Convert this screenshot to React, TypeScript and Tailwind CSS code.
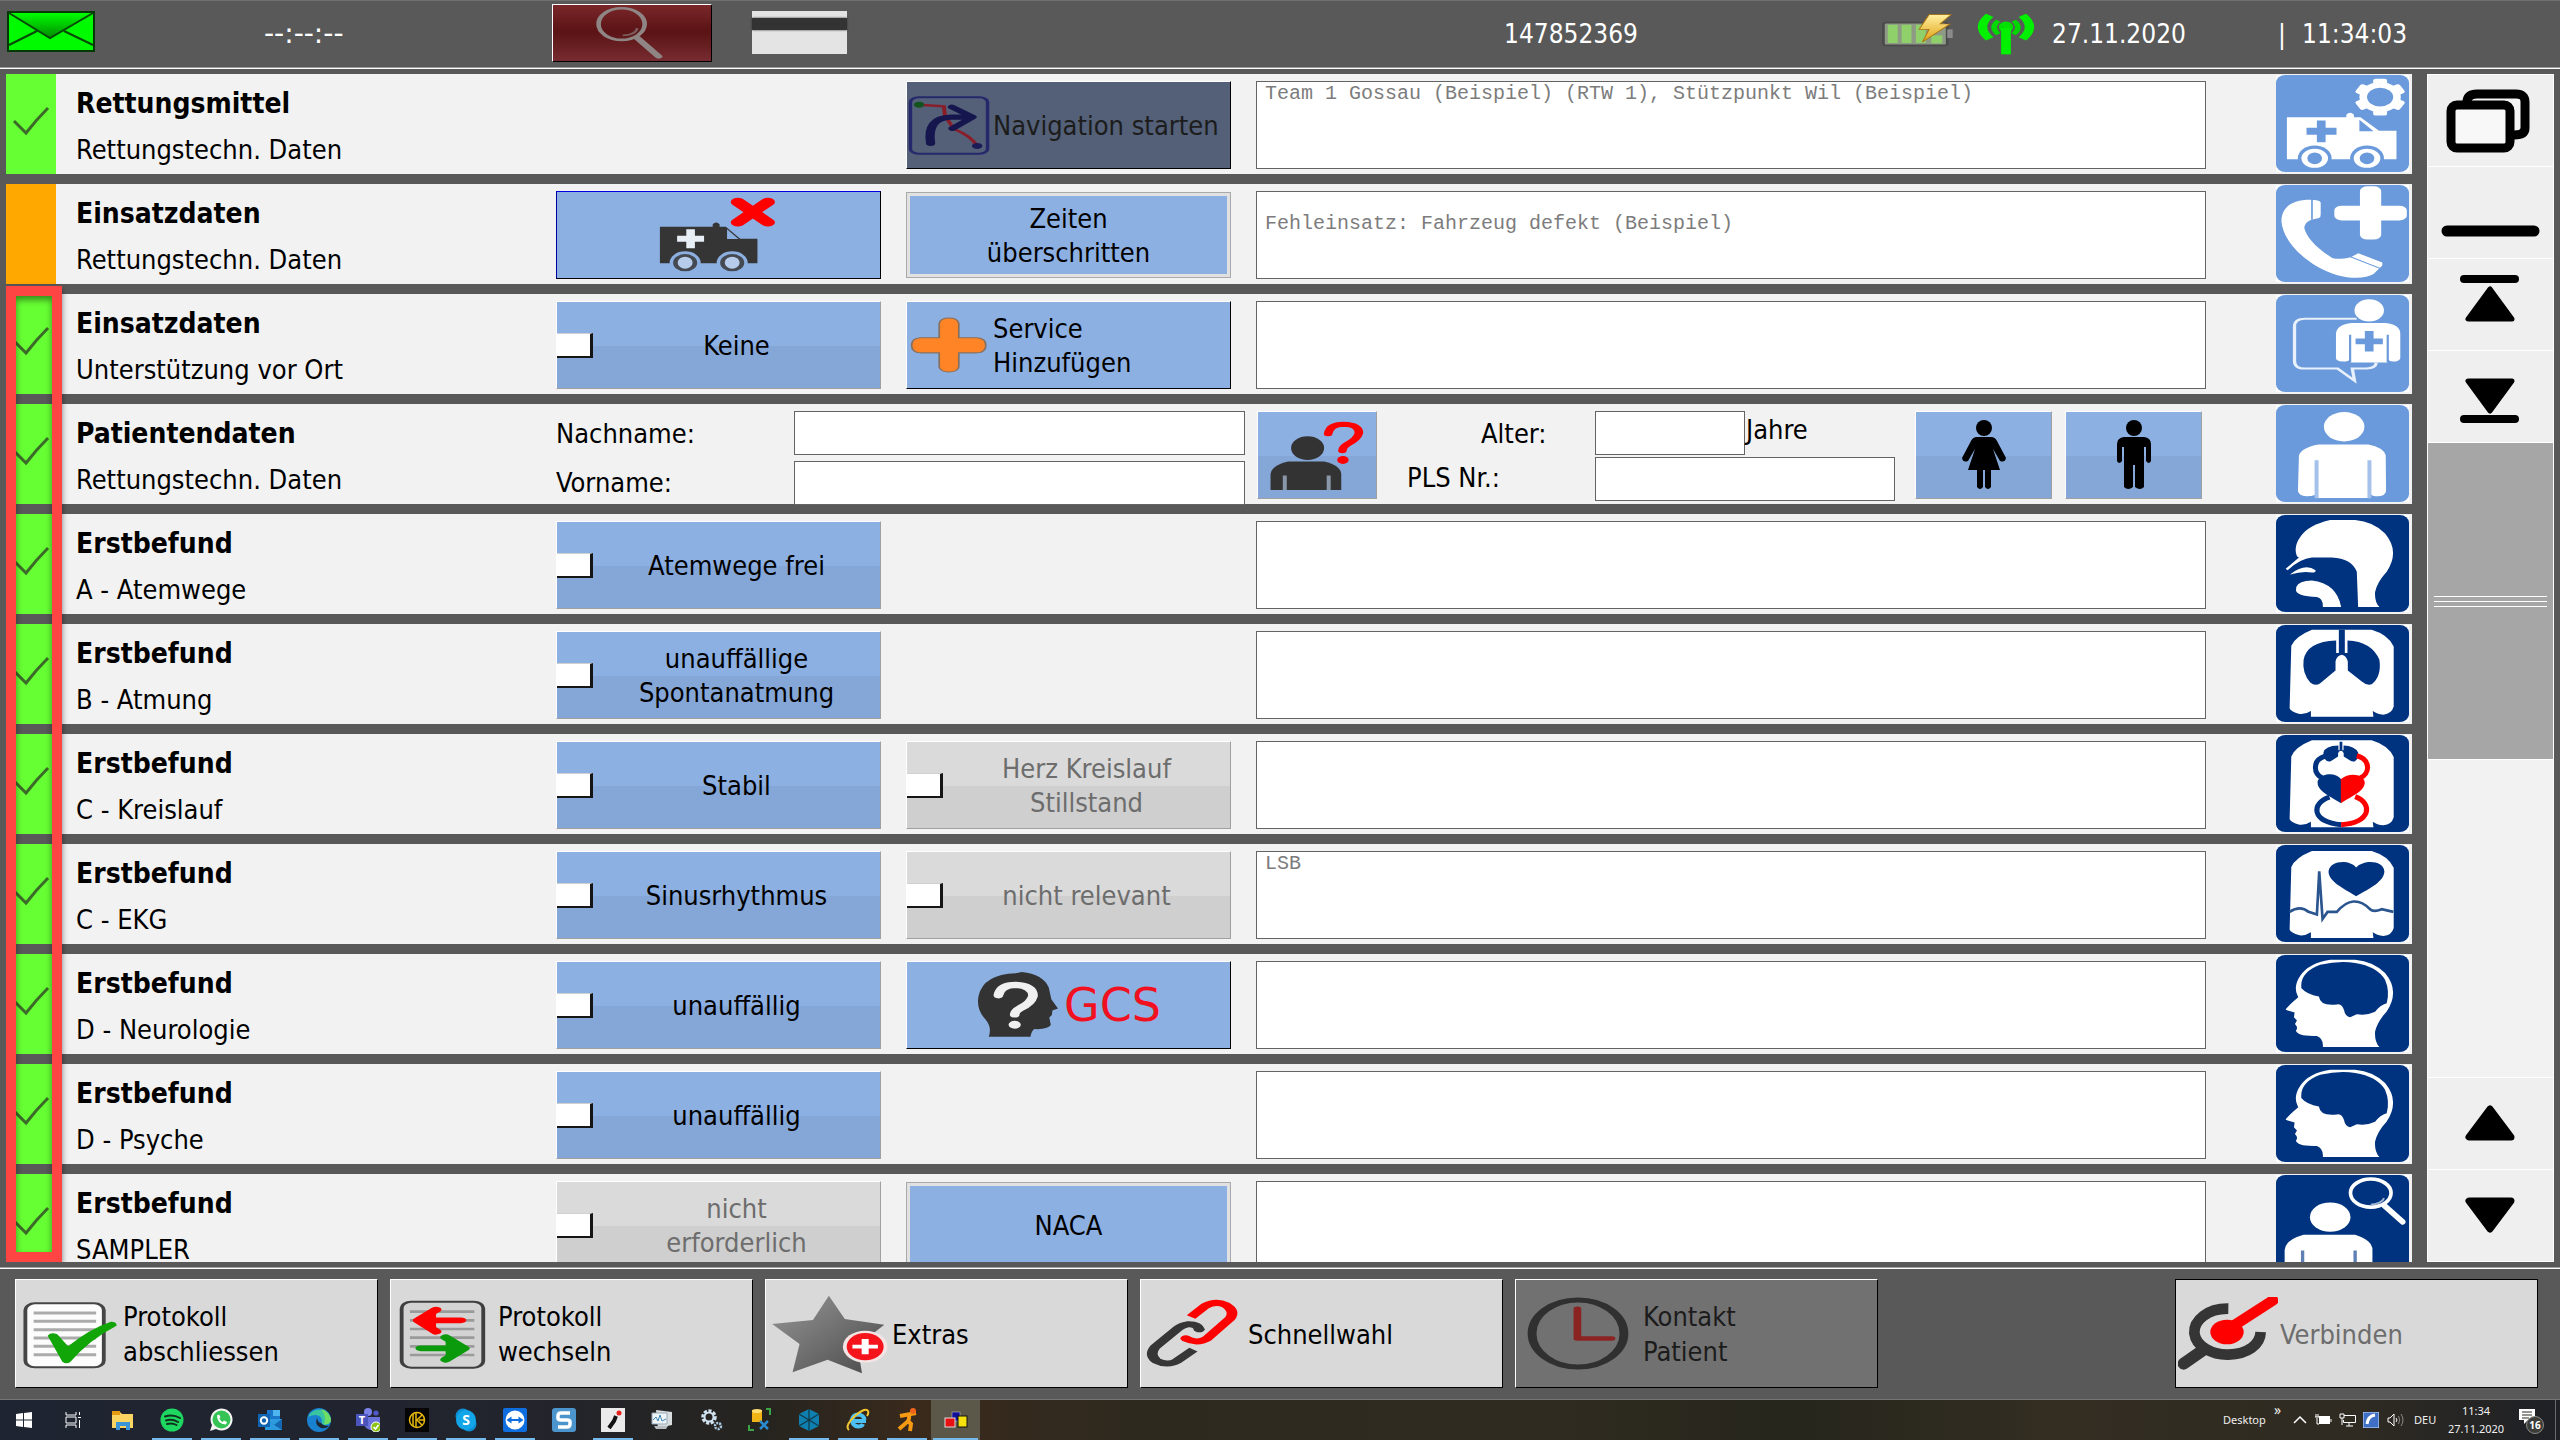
import type { ReactNode } from "react";

const LIGHT = "#6a9adb";
const NAVY = "#00337f";

/* ---------- row artwork ---------- */

function Tile({ box, dark, children }: { box: [number, number, number, number]; dark?: boolean; children: ReactNode }) {
  const [x, y, w, h] = box;
  return (
    <svg viewBox={box.join(" ")} preserveAspectRatio="none" className="h-[97px] w-[133px] shrink-0" aria-hidden="true">
      <rect x={x} y={y} width={w} height={h} fill="#ffffff" />
      <rect x={x} y={y} width={w} height={h} rx={w * 0.07} ry={h * 0.08} fill={dark ? NAVY : LIGHT} />
      {children}
    </svg>
  );
}

const TORSO =
  "M215,720 H395 Q445,735 461,770 V950 Q455,972 430,974 Q410,972 398,963 L400,980 H212 V963 Q195,974 178,972 Q150,965 148,955 L153,768 Q165,740 215,720Z";
const LUNGS =
  "M288,752 V790 H296 V720 H314 V790 H322 V752 Q395,755 418,810 Q425,860 395,883 Q380,888 365,875 L323,842 V815 Q318,797 305,795 Q290,797 286,815 V842 L240,880 Q225,890 210,878 Q185,850 190,810 Q200,755 288,752Z";

const AmbulanceGear = () => (
  <Tile box={[1049, 226, 244, 290]}>
    <g fill="#fff">
      <ellipse cx="1240" cy="292" rx="38" ry="45" />
      {[0, 60, 120].map((a) => (
        <rect key={a} x="1225" y="237" width="30" height="110" rx="6" transform={`translate(1240 292) scale(.85 1) rotate(${a}) translate(-1240 -292)`} />
      ))}
    </g>
    <ellipse cx="1240" cy="292" rx="24" ry="28" fill={LIGHT} />
    <path fill="#fff" d="M1069,352 H1178 V345 Q1185,333 1192,345 V352 H1204 L1238,393 H1270 V478 H1069Z" />
    <path fill={LIGHT} d="M1202,360 L1228,394 H1202Z M1124,362 h16 v22 h20 v21 h-20 v22 h-16 v-22 h-19 v-21 h19Z" />
    {[1120, 1216].map((c) => (
      <g key={c}>
        <ellipse cx={c} cy="475" rx="31" ry="38" fill={LIGHT} />
        <ellipse cx={c} cy="475" rx="19" ry="23" fill={LIGHT} stroke="#fff" strokeWidth="11" />
      </g>
    ))}
  </Tile>
);

const PhonePlus = () => (
  <Tile box={[1049, 556, 244, 290]}>
    <rect x="1203" y="560" width="39" height="159" rx="14" fill="#fff" />
    <rect x="1156" y="618" width="133" height="44" rx="14" fill="#fff" />
    <path
      fill="#fff"
      d="M1112,600 C1080,600 1059,620 1059,665 C1062,730 1110,800 1160,825 C1190,838 1215,835 1228,822 L1244,797 V788 L1200,760 L1186,772 C1170,778 1155,778 1150,772 C1120,740 1105,710 1101,685 C1101,672 1108,662 1116,659 L1128,655 Q1131,652 1131,645 V608 Q1129,600 1112,600Z"
    />
    <path d="M1115,598 V660 M1186,771 L1241,806" stroke={LIGHT} strokeWidth="3" />
  </Tile>
);

const HelperBubble = () => (
  <Tile box={[1049, 886, 244, 290]}>
    <path d="M1197,957 H1102 Q1083,957 1083,980 V1083 Q1083,1106 1102,1106 H1162 L1193,1142 L1189,1106 H1215 Q1232,1104 1233,1088" fill="none" stroke="#e8f0fb" strokeWidth="6" />
    <ellipse cx="1220" cy="932" rx="27" ry="33" fill="#fff" />
    <path fill="#fff" d="M1188,970 H1250 Q1277,975 1277,1002 V1075 Q1275,1085 1264,1085 Q1255,1083 1253,1075 V1088 H1186 V1075 Q1184,1085 1172,1085 Q1159,1083 1159,1075 V1002 Q1160,975 1188,970Z" />
    <path d="M1185,1005 V1086 M1254,1005 V1086" stroke={LIGHT} strokeWidth="4" />
    <path fill={LIGHT} d="M1212,994 h16 v22 h17 v17 h-17 v22 h-16 v-22 h-17 v-17 h17Z" />
  </Tile>
);

const Person = () => (
  <Tile box={[107, 45, 400, 290]}>
    <ellipse cx="312" cy="110" rx="61" ry="44" fill="#fff" />
    <path fill="#fff" d="M235,163 H385 Q430,172 437,195 L438,302 Q436,318 412,318 Q396,318 393,312 L384,323 H233 L224,314 Q215,318 198,318 Q176,316 173,302 L176,195 Q185,172 235,163Z" />
    <path d="M229,210 V324 M388,210 V324" stroke="#a3c1ea" strokeWidth="12" />
  </Tile>
);

const Airway = () => (
  <Tile dark box={[107, 375, 400, 290]}>
    <path fill="#fff" d="M170,498 Q158,470 182,438 Q205,405 270,390 H345 Q400,395 435,430 Q460,460 459,490 Q459,515 440,545 Q412,575 405,605 Q403,635 418,650 H354 L350,545 Q335,505 275,502 H215 Q180,505 142,540 L136,536 L176,502Z" />
    <path fill="#fff" d="M150,552 Q195,518 226,540 Q228,547 215,547 Q185,542 150,553Z" />
    <path fill="#fff" d="M168,590 Q175,572 215,571 Q290,580 303,650 H248 Q250,625 230,620 Q170,618 167,600Z" />
  </Tile>
);

const Lungs = () => (
  <Tile dark box={[107, 706, 400, 290]}>
    <path d={TORSO} fill="#fff" />
    <path d={LUNGS} fill={NAVY} />
  </Tile>
);

const Circulation = () => (
  <Tile dark box={[107, 1036, 400, 290]}>
    <path d={TORSO} fill="#fff" transform="translate(0 332)" />
    <path d={LUNGS} fill={NAVY} transform="translate(163 797) scale(.457 .36)" />
    <g fill="none" strokeWidth="15">
      <path d="M253,1100 C215,1112 220,1152 246,1164" stroke={NAVY} />
      <path d="M350,1098 C395,1110 388,1155 360,1164" stroke="#f00" />
      <path d="M268,1222 C212,1240 212,1296 304,1304" stroke={NAVY} />
      <path d="M345,1220 C400,1240 392,1300 303,1304" stroke="#f00" />
    </g>
    <path fill={NAVY} d="M303,1168 C285,1145 240,1150 232,1175 C230,1200 255,1212 303,1240Z" />
    <path fill="#f00" d="M302,1168 C330,1145 375,1155 374,1180 C370,1205 345,1212 302,1240Z" />
  </Tile>
);

const Ecg = () => (
  <Tile dark box={[107, 76, 400, 290]}>
    <path d={TORSO} fill="#fff" transform="translate(0 -626)" />
    <path fill={NAVY} d="M348,143 C330,120 270,120 265,155 C265,185 310,205 348,229 C390,205 432,185 433,155 C430,120 370,120 348,143Z" />
    <path d="M148,276 Q180,255 205,276 L230,284 L237,155 L247,297 L262,276 H290 Q340,218 390,268 Q400,278 425,268 L460,276" fill="none" stroke="#2a558f" strokeWidth="8" />
  </Tile>
);

const Brain = () => (
  <Tile dark box={[107, 406, 400, 290]}>
    <path fill="#fff" d="M172,528 Q158,500 180,468 Q205,430 270,420 H345 Q400,425 435,460 Q460,490 459,520 Q459,545 440,575 Q412,605 405,635 Q403,665 418,681 H248 Q250,655 230,648 Q170,650 167,632 Q175,622 164,612 L170,602 L161,592 L163,578 L136,570 Q140,560 174,532Z" />
    <path fill={NAVY} d="M183,495 Q185,455 240,435 Q300,422 345,430 Q410,440 435,480 Q450,515 440,550 Q420,555 405,576 Q380,588 350,583 L330,592 Q315,590 312,572 Q305,550 290,554 Q240,560 236,530 Q200,525 183,505Z" />
  </Tile>
);

const PersonSearch = () => (
  <Tile dark box={[107, 1066, 400, 290]}>
    <ellipse cx="392" cy="1120" rx="61" ry="42" fill="none" stroke="#fff" strokeWidth="11" />
    <path d="M392,1155 Q425,1152 432,1135" fill="none" stroke="#9fb4d3" strokeWidth="6" />
    <path d="M432,1157 L488,1206" stroke="#fff" strokeWidth="17" strokeLinecap="round" />
    <ellipse cx="270" cy="1192" rx="61" ry="44" fill="#fff" />
    <path fill="#fff" d="M190,1245 H345 Q397,1262 397,1290 V1400 H133 V1290 Q135,1260 190,1245" />
    <path d="M187,1292 V1400 M345,1292 V1400" stroke="#5d7fb4" strokeWidth="10" />
  </Tile>
);

/* ---------- button artwork ---------- */

const AmbulanceX = () => (
  <svg viewBox="1132 585 244 240" preserveAspectRatio="none" className="h-20 w-[140px]" aria-hidden="true">
    <path fill="#353535" d="M1151,680 H1243 V673 Q1249,662 1255,673 V680 H1266 L1291,716 H1321 V790 H1151Z" />
    <path fill="#8db0e3" d="M1268,688 L1288,717 H1268Z" />
    <path fill="#e8eef6" d="M1197,688 h15 v19 h16 v18 h-16 v20 h-15 v-20 h-16 v-18 h16Z" />
    {[1195, 1277].map((c) => (
      <g key={c}>
        <ellipse cx={c} cy="788" rx="27" ry="34" fill="#8db0e3" />
        <ellipse cx={c} cy="788" rx="17" ry="22" fill="#b7cceb" stroke="#454a52" strokeWidth="8" />
      </g>
    ))}
    <path d="M1287,606 L1339,667 M1339,606 L1287,667" stroke="#f00" strokeWidth="25" strokeLinecap="round" />
  </svg>
);

const NavIcon = () => (
  <svg viewBox="84 284 146 182" preserveAspectRatio="none" className="h-[61px] w-[84px] shrink-0" aria-hidden="true">
    <rect x="90" y="291" width="134" height="168" rx="14" fill="none" stroke="#25296b" strokeWidth="6" />
    <path d="M105,313 L148,318 L150,345 L165,385 Q195,405 206,436" fill="none" stroke="#8a1d2a" strokeWidth="7" />
    <path d="M125,428 Q118,352 160,350 H190" fill="none" stroke="#16164f" strokeWidth="16" strokeLinecap="round" />
    <path d="M162,320 L198,350 L163,384" fill="none" stroke="#16164f" strokeWidth="14" strokeLinecap="round" strokeLinejoin="round" />
    <circle cx="105" cy="313" r="9" fill="#14521e" />
    <circle cx="206" cy="436" r="9" fill="#1b1b58" />
  </svg>
);

const PlusIcon = () => (
  <svg viewBox="84 943 146 182" preserveAspectRatio="none" className="h-[61px] w-[84px] shrink-0" aria-hidden="true">
    <path
      fill="#ff8426"
      stroke="#86705f"
      strokeWidth="3"
      d="M140,968 Q142,952 157,952 Q172,952 174,968 V1011 H206 Q221,1013 221,1033 Q221,1054 206,1056 H174 V1098 Q172,1113 157,1113 Q142,1113 140,1098 V1056 H107 Q92,1054 92,1033 Q92,1013 107,1011 H140Z"
    />
  </svg>
);

const PersonQuestion = () => (
  <svg viewBox="692 66 207 260" preserveAspectRatio="none" className="h-full w-full" aria-hidden="true">
    <ellipse cx="779" cy="175" rx="29" ry="36" fill="#333" />
    <path fill="#333" d="M745,216 H808 Q838,228 838,255 V302 H714 V255 Q715,228 745,216Z" />
    <path d="M739,258 V302 M816,258 V302" stroke="#8a97a8" strokeWidth="7" />
    <path d="M815,132 Q818,103 842,103 Q870,104 869,130 Q866,148 850,162 Q840,172 840,183" fill="none" stroke="#f00" strokeWidth="15" strokeLinecap="round" />
    <ellipse cx="841" cy="211" rx="10" ry="12" fill="#f00" />
  </svg>
);

const Female = () => (
  <svg viewBox="0 0 44 70" className="h-[70px] w-[44px]" aria-hidden="true">
    <circle cx="22" cy="8" r="8" />
    <path d="M15,17 H29 Q33,17 35,21 L44,38 Q43,43 38,41 L31,29 L38,50 H29 V67 Q26,71 23,67 V50 H21 V67 Q18,71 15,67 V50 H6 L13,29 L6,41 Q1,43 0,38 L9,21 Q11,17 15,17Z" />
  </svg>
);

const Male = () => (
  <svg viewBox="0 0 36 70" className="h-[70px] w-[36px]" aria-hidden="true">
    <circle cx="18" cy="8" r="8" />
    <path d="M8,17 H28 Q35,18 35,24 V41 Q33,45 30,41 V27 H28 V67 Q24,71 19,67 V45 H17 V67 Q12,71 8,67 V27 H6 V41 Q3,45 1,41 V24 Q1,18 8,17Z" />
  </svg>
);

const HeadQuestion = () => (
  <svg viewBox="930 575 165 205" preserveAspectRatio="none" className="h-[68px] w-[84px]" aria-hidden="true">
    <path fill="#333" d="M955,773 Q962,745 948,720 Q930,690 935,650 Q945,585 1008,582 L1020,578 Q1062,585 1073,625 L1078,660 L1091,688 L1080,694 L1079,708 L1074,715 L1077,738 Q1070,752 1045,750 Q1039,755 1037,773Z" />
    <path d="M974,648 Q978,617 1008,617 Q1042,620 1042,650 Q1038,672 1018,686 Q1006,696 1006,706" fill="none" stroke="#f0f0f0" strokeWidth="19" strokeLinecap="round" />
    <circle cx="1006" cy="737" r="12" fill="#f0f0f0" />
  </svg>
);

const DocCheck = () => (
  <svg viewBox="30 425 160 240" preserveAspectRatio="none" className="h-20 w-[102px] shrink-0" aria-hidden="true">
    <rect x="40" y="453" width="123" height="192" rx="15" ry="20" fill="#fcfcfc" stroke="#454545" strokeWidth="6" />
    <path d="M53,482 H151 M53,507 H151 M53,532 H151 M53,557 H151 M53,582 H151 M53,607 H151" stroke="#ababab" strokeWidth="9" />
    <path fill="#12a508" d="M75,550 Q80,538 90,546 L107,582 Q140,530 174,508 Q184,508 183,520 Q140,562 110,630 Q104,637 98,628Z" />
  </svg>
);

const DocSwap = () => (
  <svg viewBox="618 425 160 240" preserveAspectRatio="none" className="h-20 w-[102px] shrink-0" aria-hidden="true">
    <rect x="630" y="448" width="128" height="198" rx="15" ry="20" fill="#d3d3d3" stroke="#3f3f3f" strokeWidth="6" />
    <path d="M643,478 H744 M643,504 H744 M643,530 H744 M643,556 H744 M643,582 H744 M643,608 H744" stroke="#9a9a9a" strokeWidth="8" />
    <g strokeLinecap="round" strokeLinejoin="round">
      <path d="M684,472 L656,504 L684,538 M670,504 H723" fill="none" stroke="#f00" strokeWidth="17" />
      <path d="M684,472 L656,504 L684,538Z" fill="#f00" />
      <path d="M699,555 L728,588 L699,622 M660,588 H715" fill="none" stroke="#0b9a0b" strokeWidth="17" />
      <path d="M699,555 L728,588 L699,622Z" fill="#0b9a0b" />
    </g>
  </svg>
);

const StarPlus = () => (
  <svg viewBox="1206 425 190 240" preserveAspectRatio="none" className="h-20 w-[121px] shrink-0 overflow-visible" aria-hidden="true">
    <defs>
      <linearGradient id="star" x1="0" y1="0" x2="1" y2="1">
        <stop offset="0" stopColor="#969696" />
        <stop offset="1" stopColor="#4a4a4a" />
      </linearGradient>
    </defs>
    <path fill="url(#star)" d="M1300,430 L1325,500 L1387,517 L1345,580 L1352,663 L1298,622 L1243,660 L1254,575 L1211,515 L1275,503Z" />
    <ellipse cx="1357" cy="583" rx="35" ry="48" fill="#f4e4e4" />
    <ellipse cx="1357" cy="583" rx="29" ry="41" fill="#f5141c" />
    <path d="M1337,583 H1377 M1357,560 V606" stroke="#fff" strokeWidth="11" />
  </svg>
);

const Chain = () => (
  <svg viewBox="280 135 170 225" preserveAspectRatio="none" className="h-[75px] w-[100px] shrink-0" aria-hidden="true">
    <g fill="none" strokeWidth="18">
      <path d="M360,198 L384,165 Q402,148 419,162 Q436,180 426,203 L387,263 Q370,280 350,262" stroke="#f00" />
      <path d="M374,238 Q372,218 354,220 Q345,222 338,232 L299,288 Q288,312 301,329 Q320,346 336,330 L364,296" stroke="#363636" />
    </g>
    <circle cx="351" cy="262" r="9" fill="#f00" />
    <circle cx="374" cy="235" r="9" fill="#363636" />
  </svg>
);

const Clock = () => (
  <svg viewBox="930 135 180 230" preserveAspectRatio="none" className="h-[77px] w-[106px] shrink-0" aria-hidden="true">
    <ellipse cx="1020" cy="250" rx="78" ry="100" fill="none" stroke="#303030" strokeWidth="15" />
    <path d="M1019,176 V265 H1077" fill="none" stroke="#8c2323" strokeWidth="13" strokeLinecap="round" strokeLinejoin="round" />
  </svg>
);

const Connect = () => (
  <svg viewBox="111 112 300 222" preserveAspectRatio="none" className="h-[74px] w-[100px] shrink-0" aria-hidden="true">
    <path d="M262,147 C200,146 158,182 160,220 C165,262 215,286 262,285 C320,283 358,255 359,217" fill="none" stroke="#353535" strokeWidth="32" />
    <path d="M185,272 L128,312" stroke="#353535" strokeWidth="36" strokeLinecap="round" />
    <ellipse cx="258" cy="217" rx="50" ry="37" fill="#f00" />
    <path d="M280,197 L396,122" stroke="#f00" strokeWidth="32" strokeLinecap="round" />
  </svg>
);

/* ---------- controls ---------- */

const BLUE_HALF = "bg-[linear-gradient(#8db0e3_51%,#85a7d8_51%)] text-black";
const GREY_HALF = "bg-[linear-gradient(#dadada_51%,#cfcfcf_51%)] text-[#6d6d6d]";

function CheckButton({ lines, grey }: { lines: string[]; grey?: boolean }) {
  return (
    <label className={`flex h-[88px] w-[325px] shrink-0 items-center border border-white border-r-[#a0a0a0] border-b-[#a0a0a0] ${grey ? GREY_HALF : BLUE_HALF}`}>
      <input type="checkbox" className="h-[25px] w-9 shrink-0 appearance-none border-t border-r-[3px] border-b-2 border-t-[#d0d0d0] border-r-[#151515] border-b-[#151515] bg-white" />
      <span className="flex flex-1 flex-col pt-px text-center leading-[34px]">
        {lines.map((l) => (
          <span key={l}>{l}</span>
        ))}
      </span>
    </label>
  );
}

function PushButton({ children, tone = "blue", name }: { children: ReactNode; tone?: "blue" | "focus" | "dim"; name?: string }) {
  const tones = {
    blue: "border-white border-r-black border-b-black bg-[#8db0e3]",
    focus: "border-black border-t-[#0000e0] border-l-[#0000a0] bg-[#8db0e3]",
    dim: "border-white border-r-black border-b-black bg-[#536077] text-[#1c1c1c]",
  };
  return (
    <button type="button" aria-label={name} className={`flex h-[88px] w-[325px] shrink-0 items-center border text-left leading-[34px] ${tones[tone]}`}>
      {children}
    </button>
  );
}

function FramedButton({ lines }: { lines: string[] }) {
  return (
    <button type="button" className="my-px flex h-[86px] w-[325px] shrink-0 border border-[#a9a9a9] bg-[#e1e1e1] p-[3px] leading-[34px]">
      <span className="flex h-full w-full flex-col items-center justify-center bg-[#8db0e3] pt-px">
        {lines.map((l) => (
          <span key={l}>{l}</span>
        ))}
      </span>
    </button>
  );
}

function Note({ label, text = "" }: { label: string; text?: string }) {
  return (
    <textarea
      aria-label={label}
      readOnly
      defaultValue={text}
      className="h-[88px] min-w-0 flex-1 resize-none border border-[#646464] bg-white px-2 pt-0.5 font-['Liberation_Mono',monospace] text-xl leading-5 text-[#7c7c7c] outline-none"
    />
  );
}

function SexButton({ name, children }: { name: string; children: ReactNode }) {
  return (
    <button type="button" aria-label={name} className={`flex h-[88px] w-[137px] items-center justify-center border border-white border-r-[#a0a0a0] border-b-[#a0a0a0] ${BLUE_HALF}`}>
      {children}
    </button>
  );
}

const FIELD = "h-11 border border-[#646464] bg-white px-2 outline-none";

function PatientFields() {
  return (
    <div className="flex flex-1 items-start">
      <div className="grid flex-1 grid-cols-[238px_1fr] gap-y-1 pt-[7px]">
        <label htmlFor="nachname" className="leading-[46px]">Nachname:</label>
        <input id="nachname" className={FIELD} />
        <label htmlFor="vorname" className="leading-[44px]">Vorname:</label>
        <input id="vorname" className={FIELD} />
      </div>
      <button type="button" aria-label="Unbekannter Patient" className={`mt-[7px] ml-3 h-[88px] w-[120px] border border-white border-r-[#a0a0a0] border-b-[#a0a0a0] ${BLUE_HALF}`}>
        <PersonQuestion />
      </button>
      <div className="ml-[30px] grid grid-cols-[188px_300px] gap-y-[2px] pt-[7px]">
        <label htmlFor="alter" className="h-11 pl-[74px] leading-[46px]">Alter:</label>
        <div className="flex h-11 items-start">
          <input id="alter" className={`${FIELD} w-[150px]`} />
          <span className="pl-px leading-[38px]">Jahre</span>
        </div>
        <label htmlFor="pls" className="leading-[42px]">PLS Nr.:</label>
        <input id="pls" className={FIELD} />
      </div>
      <div className="mt-[7px] ml-5 flex gap-[13px] pr-1">
        <SexButton name="weiblich"><Female /></SexButton>
        <SexButton name="männlich"><Male /></SexButton>
      </div>
    </div>
  );
}

type RowData = {
  title: string;
  sub: string;
  state?: "ok" | "warn";
  first?: ReactNode;
  second?: ReactNode;
  note?: string;
  body?: ReactNode;
  icon: ReactNode;
};

const ROWS: RowData[] = [
  {
    title: "Rettungsmittel",
    sub: "Rettungstechn. Daten",
    second: <PushButton tone="dim"><NavIcon /><span className="pt-0.5 pl-0.5">Navigation starten</span></PushButton>,
    note: "Team 1 Gossau (Beispiel) (RTW 1), Stützpunkt Wil (Beispiel)",
    icon: <AmbulanceGear />,
  },
  {
    title: "Einsatzdaten",
    sub: "Rettungstechn. Daten",
    state: "warn",
    first: <PushButton tone="focus" name="Fehleinsatz"><span className="flex flex-1 justify-center"><AmbulanceX /></span></PushButton>,
    second: <FramedButton lines={["Zeiten", "überschritten"]} />,
    note: "\nFehleinsatz: Fahrzeug defekt (Beispiel)",
    icon: <PhonePlus />,
  },
  {
    title: "Einsatzdaten",
    sub: "Unterstützung vor Ort",
    first: <CheckButton lines={["Keine"]} />,
    second: <PushButton><PlusIcon /><span className="flex flex-col pt-0.5 pl-0.5"><span>Service</span><span>Hinzufügen</span></span></PushButton>,
    icon: <HelperBubble />,
  },
  { title: "Patientendaten", sub: "Rettungstechn. Daten", body: <PatientFields />, icon: <Person /> },
  { title: "Erstbefund", sub: "A - Atemwege", first: <CheckButton lines={["Atemwege frei"]} />, icon: <Airway /> },
  { title: "Erstbefund", sub: "B - Atmung", first: <CheckButton lines={["unauffällige", "Spontanatmung"]} />, icon: <Lungs /> },
  {
    title: "Erstbefund",
    sub: "C - Kreislauf",
    first: <CheckButton lines={["Stabil"]} />,
    second: <CheckButton grey lines={["Herz Kreislauf", "Stillstand"]} />,
    icon: <Circulation />,
  },
  {
    title: "Erstbefund",
    sub: "C - EKG",
    first: <CheckButton lines={["Sinusrhythmus"]} />,
    second: <CheckButton grey lines={["nicht relevant"]} />,
    note: "LSB",
    icon: <Ecg />,
  },
  {
    title: "Erstbefund",
    sub: "D - Neurologie",
    first: <CheckButton lines={["unauffällig"]} />,
    second: (
      <PushButton>
        <span className="flex flex-1 items-center justify-center gap-1 font-['DejaVu_Sans',sans-serif] text-[46px] text-[#f01020]">
          <HeadQuestion />
          GCS
        </span>
      </PushButton>
    ),
    icon: <Brain />,
  },
  { title: "Erstbefund", sub: "D - Psyche", first: <CheckButton lines={["unauffällig"]} />, icon: <Brain /> },
  {
    title: "Erstbefund",
    sub: "SAMPLER",
    first: <CheckButton grey lines={["nicht", "erforderlich"]} />,
    second: <FramedButton lines={["NACA"]} />,
    icon: <PersonSearch />,
  },
];

function Row({ row }: { row: RowData }) {
  return (
    <section className="flex h-[100px] shrink-0 bg-[#f2f2f2]">
      <div className={`w-[50px] shrink-0 ${row.state === "warn" ? "bg-[#ffa800]" : "bg-[#66ff33]"}`}>
        {row.state !== "warn" && (
          <svg viewBox="0 0 50 100" className="h-[100px] w-[50px]" aria-hidden="true">
            <path d="M8,47 L20,59 Q30,46 42,34" fill="none" stroke="#3b6a29" strokeWidth="3" />
          </svg>
        )}
      </div>
      <div className="w-[500px] shrink-0 pt-[13px] pl-5 leading-[34px]">
        <h2 className="text-[28px] leading-[34px] font-bold">{row.title}</h2>
        <p className="mt-3">{row.sub}</p>
      </div>
      {row.body ?? (
        <div className="flex flex-1 items-start pt-[7px]">
          <div className="w-[350px] shrink-0">{row.first}</div>
          <div className="w-[350px] shrink-0">{row.second}</div>
          <Note label={`${row.title} ${row.sub}`} text={row.note} />
        </div>
      )}
      <div className="flex shrink-0 bg-[#f2f2f2] pt-px pr-[3px] pl-[70px]">{row.icon}</div>
    </section>
  );
}

/* ---------- side bar ---------- */

function SideButton({ name, children }: { name: string; children: ReactNode }) {
  return (
    <button type="button" aria-label={name} className="h-[92px] shrink-0 border-t border-white bg-[#efefef]">
      <svg viewBox="0 0 125 91" className="h-[91px] w-full" aria-hidden="true" strokeLinejoin="round" strokeLinecap="round">
        {children}
      </svg>
    </button>
  );
}

function SideBar() {
  return (
    <nav className="flex w-[127px] shrink-0 flex-col border border-t-0 border-white bg-[#f2f2f2]">
      <SideButton name="Fenster">
        <path fill="#f4f4f4" stroke="#000" strokeWidth="9" strokeLinecap="butt" d="M39,30 V26 Q40,19 49,19 H88 Q97,19 97,27 V53 Q97,60 86,60" />
        <rect x="23" y="30" width="59" height="43" rx="6" fill="#f8f8f8" stroke="#000" strokeWidth="9" />
      </SideButton>
      <SideButton name="Minimieren">
        <path stroke="#000" strokeWidth="11" d="M19,64 H106" />
      </SideButton>
      <SideButton name="Zum Anfang">
        <path stroke="#000" strokeWidth="8" d="M36,20 H87" />
        <path stroke="#000" strokeWidth="5" d="M62,30 L40,60 H84Z" />
      </SideButton>
      <SideButton name="Zum Ende">
        <path stroke="#000" strokeWidth="8" d="M36,68 H87" />
        <path stroke="#000" strokeWidth="5" d="M62,60 L40,30 H84Z" />
      </SideButton>
      <div className="flex h-[318px] shrink-0 flex-col justify-center gap-1 border-y border-white bg-[#a6a6a6] px-1.5">
        <div className="h-px bg-white" />
        <div className="h-px bg-white" />
        <div className="h-px bg-white" />
      </div>
      <div className="flex-1" />
      <SideButton name="Nach oben">
        <path stroke="#000" strokeWidth="7" d="M62,31 L41,59 H83Z" />
      </SideButton>
      <SideButton name="Nach unten">
        <path stroke="#000" strokeWidth="7" d="M62,59 L41,31 H83Z" />
      </SideButton>
    </nav>
  );
}

/* ---------- header and footer ---------- */

function Header() {
  return (
    <header className="flex h-[69px] shrink-0 items-start border-b border-white text-[26px] leading-10 text-white shadow-[inset_0_-1px_0_#9a9a9a,inset_0_1px_0_#707070]">
      <button type="button" aria-label="Nachrichten" className="mt-[11px] ml-[7px]">
        <svg viewBox="0 0 88 41" className="h-[41px] w-[88px]" aria-hidden="true">
          <defs>
            <linearGradient id="mail" x1="0" y1="0" x2="0" y2="1">
              <stop offset="0" stopColor="#00ff00" />
              <stop offset="1" stopColor="#008a00" />
            </linearGradient>
          </defs>
          <rect x="1" y="1" width="86" height="39" fill="#00fb00" stroke="#063806" strokeWidth="2" />
          <path d="M2,2 L43,27 L86,2Z" fill="url(#mail)" />
          <path d="M2,2 L43,27 L86,2 M2,34 L30,20 M86,34 L57,20" fill="none" stroke="#064a06" strokeWidth="2" />
        </svg>
      </button>
      <span className="mt-[14px] ml-[169px] w-[288px] font-['DejaVu_Sans',sans-serif] text-[28px]">--:--:--</span>
      <button type="button" aria-label="Suchen" className="mt-1 h-[58px] w-40 border border-white border-r-black border-b-black bg-[linear-gradient(#7a2729,#5c1416_45%,#5c1416_50%,#762c30)]">
        <svg viewBox="964 14 274 170" preserveAspectRatio="none" className="h-full w-full" aria-hidden="true">
          <ellipse cx="1083" cy="72" rx="40" ry="48" fill="none" stroke="#8f8585" strokeWidth="8" />
          <path d="M1085,106 Q1108,104 1110,84" fill="none" stroke="#7a5a5a" strokeWidth="5" />
          <path d="M1110,114 L1147,170" stroke="#8f8585" strokeWidth="13" strokeLinecap="round" />
        </svg>
      </button>
      <div className="mt-[11px] ml-10 h-[43px] w-[95px] bg-[#e4e4e4] pt-[7px]">
        <div className="h-3 bg-[#333] shadow-[0_0_2px_#333]" />
      </div>
      <div className="mt-[14px] mr-[148px] ml-auto flex items-start">
        <span className="w-[375px]">147852369</span>
        <svg viewBox="325 38 140 105" preserveAspectRatio="none" className="h-[35px] w-[77px]" aria-hidden="true">
          <defs>
            <linearGradient id="bolt" x1="0" y1="0" x2="0" y2="1">
              <stop offset="0" stopColor="#fff0a0" />
              <stop offset="1" stopColor="#e0a010" />
            </linearGradient>
          </defs>
          <rect x="333" y="64" width="116" height="68" rx="5" fill="#8e9a86" stroke="#4a4a4a" strokeWidth="5" />
          <rect x="449" y="84" width="10" height="26" fill="#8a8a8a" />
          <path d="M341,70 h18 v55 h-18Z M366,70 h18 v55 h-18Z M392,70 h18 v55 h-18Z" fill="#8fd06a" />
          <path d="M420,102 h20 v24 h-20Z" fill="#8fd06a" />
          <path d="M416,40 L456,40 L436,68 H454 L404,122 L416,84 H398Z" fill="url(#bolt)" stroke="#a87410" strokeWidth="2" />
        </svg>
        <svg viewBox="505 38 110 128" preserveAspectRatio="none" className="ml-5 h-[43px] w-[60px]" aria-hidden="true">
          <ellipse cx="560" cy="77" rx="13" ry="17" fill="#00e000" />
          <path d="M560,80 V158" stroke="#00f000" strokeWidth="18" />
          <g fill="none" stroke="#00f000">
            <path d="M530,42 Q504,77 530,112 M590,42 Q616,77 590,112" strokeWidth="17" />
            <path d="M546,58 Q530,77 546,98 M574,58 Q590,77 574,98" strokeWidth="10" stroke="#00d800" />
          </g>
        </svg>
        <span className="ml-4 w-[226px]">27.11.2020</span>
        <span className="w-[24px]">|</span>
        <span className="w-[110px]">11:34:03</span>
      </div>
    </header>
  );
}

function FooterButton({ lines, icon, pad, tone = "normal" }: { lines: string[]; icon: ReactNode; pad: string; tone?: "normal" | "dim" | "off" }) {
  const tones = {
    normal: "border-white border-r-black border-b-black bg-[#d9d9d9] text-black",
    dim: "border-white border-r-black border-b-black bg-[#717171] text-[#1c1c1c]",
    off: "ml-auto border-black bg-[#d9d9d9] text-[#6d6d6d]",
  };
  return (
    <button type="button" disabled={tone === "off"} className={`flex h-[109px] w-[363px] items-center border text-left leading-[35px] ${pad} ${tones[tone]}`}>
      {icon}
      <span className="flex flex-col pt-px">
        {lines.map((l) => (
          <span key={l}>{l}</span>
        ))}
      </span>
    </button>
  );
}

function Footer() {
  return (
    <footer className="mt-[5px] flex h-[133px] shrink-0 items-start gap-3 border-t border-b border-t-[#a0a0a0] border-b-[#757575] pt-[11px] pr-[22px] pl-[15px] shadow-[inset_0_1px_0_#fff]">
      <FooterButton pad="gap-0.5 pl-[3px]" lines={["Protokoll", "abschliessen"]} icon={<DocCheck />} />
      <FooterButton pad="gap-0.5 pl-[3px]" lines={["Protokoll", "wechseln"]} icon={<DocSwap />} />
      <FooterButton pad="gap-0.5 pl-[3px]" lines={["Extras"]} icon={<StarPlus />} />
      <FooterButton pad="gap-1 pl-[3px]" lines={["Schnellwahl"]} icon={<Chain />} />
      <FooterButton pad="gap-3 pl-[9px]" tone="dim" lines={["Kontakt", "Patient"]} icon={<Clock />} />
      <FooterButton pad="gap-0.5 pl-0.5" tone="off" lines={["Verbinden"]} icon={<Connect />} />
    </footer>
  );
}

/* ---------- desktop task bar ---------- */

const S = ({ children }: { children: ReactNode }) => (
  <svg viewBox="0 0 24 24" className="h-6 w-6" aria-hidden="true">{children}</svg>
);

const Letter = ({ x, y, size, fill = "#fff", children }: { x: number; y: number; size: number; fill?: string; children: string }) => (
  <text x={x} y={y} fontSize={size} fill={fill} textAnchor="middle" fontWeight="bold" fontFamily="Noto Sans, sans-serif">{children}</text>
);

type Task = { name: string; run?: boolean; active?: boolean; icon: ReactNode };

const TASKS: Task[] = [
  { name: "Explorer", icon: <><path d="M1,4 H9 L11,6 H22 V20 H1Z" fill="#fcd462" /><path d="M1,3 H9 V7 H1Z" fill="#e39b12" /><path d="M5,22 V14 H19 V22 H15 V18 H9 V22Z" fill="#3b95d9" /></> },
  { name: "Spotify", run: true, icon: <><circle cx="12" cy="12" r="11.5" fill="#1ed760" /><path d="M5,8.500 Q13,6 20,10 M6,12.500 Q12,10.500 18,14 M7,16 Q12,14.500 16.500,17" fill="none" stroke="#10301c" strokeWidth="2" strokeLinecap="round" /></> },
  { name: "WhatsApp", run: true, icon: <><path d="M1,23 L3,17 A11,11 0 1 1 7,21Z" fill="#f4f4f4" /><circle cx="12.500" cy="11.500" r="9" fill="#35c353" /><path d="M8,7.500 Q8,16 17,16.500 L18,14 L15,12.500 L13.500,14 Q11.500,13 10.500,10.500 L11.500,9 L10,6.500Z" fill="#fff" /></> },
  { name: "Outlook", run: true, icon: <><path d="M9,2 H22 V12 H9Z" fill="#1a76c8" /><path d="M15,2 H22 V8 H15Z" fill="#4fb5ee" /><path d="M7,11 L24,11 V22 H7Z" fill="#2d9be0" /><path d="M7,11 L16,17 L24,11 V22Z" fill="#1466b0" /><rect x="0" y="6" width="12" height="13" fill="#0f64b4" /><circle cx="6" cy="12.500" r="3.200" fill="none" stroke="#fff" strokeWidth="2" /></> },
  { name: "Edge", run: true, icon: <><circle cx="12" cy="12" r="12" fill="#1a80d0" /><path d="M1,9 A12,12 0 0 1 24,12 Q23,17 17,17 Q14,16 15,13 Q15,8 9,7 Q4,7 1,9Z" fill="#39c5a0" /><path d="M14,1 A12,12 0 0 1 24,13 Q22,17 17,16 Q20,9 14,1Z" fill="#6fdc63" /><path d="M10,10 Q7,17 14,20 Q19,21 22,18 Q16,18 14,15 Q11,15 10,10Z" fill="#1e2632" /></> },
  { name: "Teams", run: true, icon: <><circle cx="12" cy="4" r="4" fill="#7b83eb" /><circle cx="20" cy="5" r="2.600" fill="#5059c9" /><path d="M8,9 H24 V17 Q22,22 14,22 Q8,20 8,15Z" fill="#6a72dc" /><rect x="0" y="6" width="12" height="12" fill="#4b53bc" /><Letter x={6} y={16} size={11}>T</Letter><circle cx="20" cy="19" r="5" fill="#8cc317" stroke="#fff" /><path d="M17.500,19 L19.500,21 L22.500,17" fill="none" stroke="#fff" strokeWidth="1.500" /></> },
  { name: "K", run: true, icon: <><rect width="24" height="24" fill="#050505" /><circle cx="12" cy="12" r="7.500" fill="none" stroke="#e8b80c" strokeWidth="1.500" /><path d="M8,6 V18 M11,5 V19 M12,12 L17,7 M12,12 L17,17 M14,12 H19" stroke="#e8b80c" strokeWidth="1.500" /></> },
  { name: "Skype", run: true, icon: <><circle cx="9" cy="8" r="7.500" fill="#0e8fd4" /><circle cx="15" cy="16" r="7.500" fill="#0e8fd4" /><circle cx="12" cy="12" r="10" fill="#12a5e8" /><Letter x={12} y={17} size={14}>S</Letter></> },
  { name: "TeamViewer", run: true, icon: <><rect x="0" y="0" width="24" height="24" rx="2" fill="#0e6ee0" /><circle cx="12" cy="12" r="9.500" fill="#fff" /><path d="M3.500,12 L8.500,8.500 V11 H15.500 V8.500 L20.500,12 L15.500,15.500 V13 H8.500 V15.500Z" fill="#0e6ee0" /></> },
  { name: "Snagit", icon: <><rect width="24" height="24" rx="3" fill="#4b95cc" /><path d="M18,5 H9 Q6,5 6,8 V10 Q6,12 9,12 H15 Q18,12 18,14 V16 Q18,19 15,19 H6" fill="none" stroke="#fff" strokeWidth="3.500" /></> },
  { name: "Stift", run: true, icon: <><rect width="24" height="24" fill="#eaeaea" /><path d="M15,8 L13,13 L8,20" fill="none" stroke="#111" strokeWidth="4" /><circle cx="18" cy="5" r="2.500" fill="#e8201c" /></> },
  { name: "Monitor", icon: <><path d="M6,2 L22,4 V17 L8,20Z" fill="#d8dde0" /><path d="M2,5 H17 V16 H2Z" fill="#eef4f6" stroke="#9ab" /><path d="M3,12 L6,9 L8,13 L10,7 L12,13 L16,11" fill="none" stroke="#3c86b8" /><path d="M4,18 H18 L16,21 H6Z" fill="#b7bcc0" /></> },
  { name: "Dienste", icon: <><circle cx="10" cy="9" r="6" fill="none" stroke="#cfe2ef" strokeWidth="3.500" strokeDasharray="3 1.500" /><circle cx="10" cy="9" r="4.500" fill="none" stroke="#cfe2ef" strokeWidth="2" /><circle cx="19" cy="18" r="3" fill="none" stroke="#a9c9de" strokeWidth="2.500" strokeDasharray="2 1" /></> },
  { name: "Datenbank", icon: <><path d="M4,2 H14 V14 H4Z" fill="#f0b416" /><ellipse cx="9" cy="3" rx="5" ry="2" fill="#ffdf70" /><path d="M18,1 H22 V7 M1,17 V22 H6" fill="none" stroke="#3aa648" strokeWidth="2" /><path d="M12,13 L20,21 M20,13 L12,21" stroke="#2b8bd0" strokeWidth="2.500" /></> },
  { name: "Netz", run: true, icon: <><path d="M12,1 L22,6 V18 L12,23 L2,18 V6Z" fill="#0e7fae" /><path d="M12,1 V23 M2,6 L22,18 M22,6 L2,18" stroke="#123848" strokeWidth="1.200" /></> },
  { name: "Internet Explorer", run: true, icon: <><path d="M20,13 H6 Q7,18 12,18.500 Q16,18.500 17,16 M6,12 Q7,6.500 12,6.500 Q18,7 18.500,12" fill="none" stroke="#4cc0f4" strokeWidth="4" /><path d="M3,22 Q-2,18 10,7 Q20,-1 22,3 Q23,5 21,8" fill="none" stroke="#f3c530" strokeWidth="2" /></> },
  { name: "Läufer", run: true, icon: <><path d="M5,8 L21,5 M14,7 Q15,12 11,15 L4,21 M12,12 L16,16 L15,23" fill="none" stroke="#f59a12" strokeWidth="4" /><circle cx="18" cy="3" r="3" fill="#f0641c" /></> },
  { name: "Protokoll", run: true, active: true, icon: <><rect x="8" y="4" width="8" height="9" fill="#10109a" stroke="#ccc" strokeWidth=".5" /><rect x="1" y="10" width="10" height="9" fill="#e81010" stroke="#ddd" /><rect x="14" y="8" width="9" height="11" fill="#f5e20c" stroke="#111" /></> },
];

function TaskBar() {
  return (
    <div className="flex h-10 shrink-0 bg-[linear-gradient(90deg,#1e2431,#22242d_20%,#26241f_30%,#3a2a1c_36%,#2e291f_44%,#302b20_60%,#26261c_70%,#332d22_80%,#2f2b22_92%,#1e2026)] font-['Noto_Sans',sans-serif] text-[11px] leading-[18px] text-[#f0f0f0]">
      <button type="button" aria-label="Start" className="flex w-12 items-center justify-center">
        <svg viewBox="0 0 16 16" className="h-4 w-4" aria-hidden="true"><path fill="#fff" d="M0,2 L7,1 V7.500 H0Z M8,1 L16,0 V7.500 H8Z M0,8.500 H7 V15 L0,14Z M8,8.500 H16 V16 L8,15Z" /></svg>
      </button>
      <button type="button" aria-label="Taskansicht" className="flex w-[50px] items-center justify-center">
        <svg viewBox="0 0 16 16" className="h-4 w-4" aria-hidden="true"><path fill="none" stroke="#fff" d="M1,0 V3 H11 V0 M1,5 H11 V11 H1Z M1,16 V13 H11 V16 M14.500,0 V3 M14.500,8 V16 M13,5.500 H16" /></svg>
      </button>
      {TASKS.map((t) => (
        <button key={t.name} type="button" aria-label={t.name} className={`flex w-[49px] flex-col items-center justify-between ${t.active ? "bg-[#5b5749]" : ""}`}>
          <span className="pt-2"><S>{t.icon}</S></span>
          <span className={`h-0.5 ${t.active ? "w-[45px]" : "w-10"} ${t.run ? "bg-[#76b9ed]" : ""}`} />
        </button>
      ))}
      <div className="ml-auto flex items-center">
        <span className="w-[51px]">Desktop</span>
        <span className="w-[19px] self-start text-sm">»</span>
        <svg viewBox="0 0 14 10" className="h-2.5 w-3.5" aria-hidden="true"><path d="M1,8 L7,2 L13,8" fill="none" stroke="#fff" strokeWidth="1.500" /></svg>
        <svg viewBox="0 0 18 14" className="ml-[7px] h-3.5 w-[18px]" aria-hidden="true"><rect x="5.500" y="3.500" width="10" height="7" fill="#fff" stroke="#fff" /><path d="M17,6 V9 M1,4 H5 M2,1 V4 M4,1 V4 M3,5 V11 H5" stroke="#fff" fill="none" /></svg>
        <svg viewBox="0 0 18 14" className="ml-[7px] h-3.5 w-[18px]" aria-hidden="true"><path d="M5,2.500 H16.500 V9.500 H4.500 V7 M10,10 V13 M7,13 H14 M1,1 H5 V5 H1Z M3,5 V12" stroke="#fff" fill="none" /></svg>
        <svg viewBox="0 0 16 16" className="ml-1.5 h-4 w-4" aria-hidden="true"><rect width="16" height="16" fill="#3f6fc4" stroke="#cfe0ff" /><path d="M12,3 Q5,4 4,12" fill="none" stroke="#fff" strokeWidth="3" /></svg>
        <svg viewBox="0 0 18 14" className="ml-2 h-3.5 w-[18px]" aria-hidden="true"><path d="M1,5 H3 L7,1 V13 L3,9 H1Z M9,5 Q11,7 9,9" stroke="#fff" fill="none" /><path d="M11.500,3 Q14,7 11.500,11 M14,1 Q18,7 14,13" stroke="#8a8a85" fill="none" /></svg>
        <span className="ml-[9px] w-[32px]">DEU</span>
        <span className="flex w-[60px] flex-col text-center">
          <span>11:34</span>
          <span>27.11.2020</span>
        </span>
        <svg viewBox="0 0 28 30" className="ml-[13px] h-[30px] w-7" aria-hidden="true">
          <path d="M0,4 H16 V15 H9 L5,19 V15 H0Z" fill="#fff" />
          <path d="M3,7 H13 M3,10 H13 M3,13 H10" stroke="#2a2a28" />
          <circle cx="16" cy="20" r="8.500" fill="#3b3b38" stroke="#8b8b88" />
          <Letter x={16} y={24} size={10}>16</Letter>
        </svg>
        <div className="ml-2 h-10 w-[5px] border-l border-[#6a6a6a]" />
      </div>
    </div>
  );
}

export default function App() {
  return (
    <div className="flex h-screen flex-col overflow-hidden bg-[#595959] font-['DejaVu_Sans_Condensed','DejaVu_Sans',sans-serif] text-[27px] text-black">
      <Header />
      <main className="flex min-h-0 flex-1 gap-[15px] pt-[5px] pr-1.5 pl-1.5">
        <div className="relative flex min-w-0 flex-1 flex-col gap-2.5 overflow-hidden">
          {ROWS.map((r, i) => (
            <Row key={i} row={r} />
          ))}
          <div className="pointer-events-none absolute top-[212px] bottom-0 left-0 w-14 border-[10px] border-[#ff4444] shadow-[0_3px_6px_rgba(0,0,0,.5),inset_0_4px_6px_rgba(0,0,0,.45)]" />
        </div>
        <SideBar />
      </main>
      <Footer />
      <TaskBar />
    </div>
  );
}
